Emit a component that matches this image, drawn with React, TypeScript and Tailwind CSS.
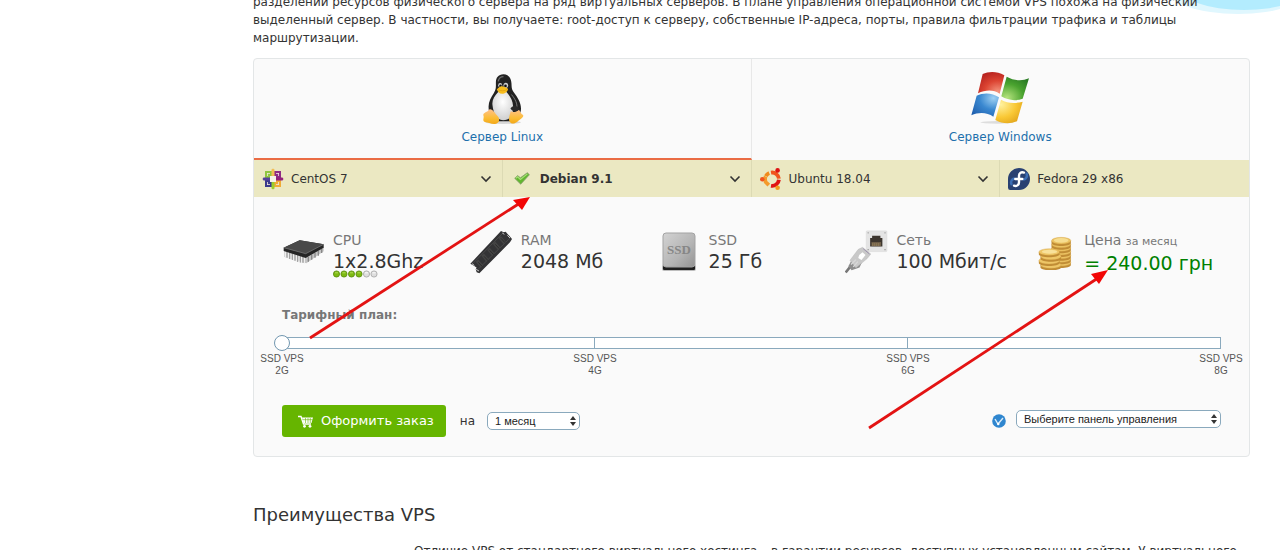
import { useState } from 'react';
import type { ReactNode } from 'react';

const plans = ['2G', '4G', '6G', '8G'];

function TuxLogo() {
  return (
    <svg viewBox="120 35 130 157" className="h-13 w-[43px]" aria-hidden="true">
      <defs>
        <radialGradient id="tuxBelly" cx="50%" cy="35%" r="65%">
          <stop offset="0" stopColor="#ffffff" />
          <stop offset="1" stopColor="#cfcfcf" />
        </radialGradient>
        <linearGradient id="tuxFoot" x1="0" y1="0" x2="0" y2="1">
          <stop offset="0" stopColor="#ffc08a" />
          <stop offset="0.6" stopColor="#fbbd35" />
          <stop offset="1" stopColor="#f3a818" />
        </linearGradient>
      </defs>
      <ellipse cx="187" cy="184" rx="54" ry="5" fill="#d8d8d8" />
      <path d="M188 39c-16 0-23 11-23 25 0 14 1 20-6 31-9 14-17 27-16 44 0 14 6 34 18 42h50c14-5 30-20 30-38 0-20-12-36-22-50-7-10-6-15-7-28-1-14-9-26-24-26z" fill="#222" />
      <path d="M172 60c2-9 8-14 16-14" stroke="#6d6d6d" strokeWidth="4" fill="none" />
      <path d="M172 92c-12 12-20 26-17 42 2 18 10 43 32 44 22 0 32-19 30-43-1-18-10-32-20-43z" fill="url(#tuxBelly)" />
      <path d="M212 100c11 13 19 28 16 42" stroke="#777" strokeWidth="3" fill="none" />
      <ellipse cx="178" cy="72" rx="6" ry="7" fill="#cfcfcf" />
      <ellipse cx="195" cy="72" rx="7" ry="8" fill="#cfcfcf" />
      <circle cx="179" cy="74" r="4" fill="#111" />
      <circle cx="194" cy="74" r="4" fill="#111" />
      <path d="M168 84c5-4 9-9 15-9s15 5 19 8c-2 8-10 15-18 15-8 0-14-7-16-14z" fill="#f8bd1c" />
      <path d="M171 85c9 5 20 5 29-1" stroke="#d99a12" strokeWidth="2" fill="none" />
      <path d="M145 145c10-3 17 12 25 20 10 11 4 23-8 24-11 1-21-5-30-6-10-3-1-12-5-20-1-10 13-9 18-18z" fill="url(#tuxFoot)" />
      <path d="M210 150c5 5 16 4 25-4 4 6 6 12 12 16 4 6-6 10-14 17-8 8-19 12-25 5-7-8-1-22 2-34z" fill="url(#tuxFoot)" />
      <path d="M209 142c8-10 19-9 26-1-3 12-18 14-26 1z" fill="#2a2a2a" />
    </svg>
  );
}

function WindowsLogo() {
  return (
    <svg viewBox="123 27 180 168" className="h-[56px] w-[60px]" aria-hidden="true">
      <defs>
        <radialGradient id="winRed" cx="75%" cy="90%" r="100%">
          <stop offset="0" stopColor="#f3937c" />
          <stop offset="0.5" stopColor="#dc4432" />
          <stop offset="1" stopColor="#b31e1c" />
        </radialGradient>
        <radialGradient id="winGreen" cx="20%" cy="90%" r="100%">
          <stop offset="0" stopColor="#b5e37e" />
          <stop offset="0.6" stopColor="#4aa32f" />
          <stop offset="1" stopColor="#2b7d25" />
        </radialGradient>
        <radialGradient id="winBlue" cx="80%" cy="20%" r="100%">
          <stop offset="0" stopColor="#9ed0f3" />
          <stop offset="0.5" stopColor="#3a88d0" />
          <stop offset="1" stopColor="#1f5fae" />
        </radialGradient>
        <radialGradient id="winYellow" cx="20%" cy="20%" r="110%">
          <stop offset="0" stopColor="#fff2a0" />
          <stop offset="0.5" stopColor="#f9c835" />
          <stop offset="1" stopColor="#d9960f" />
        </radialGradient>
      </defs>
      <ellipse cx="204" cy="187" rx="50" ry="4" fill="#dddddd" />
      <path d="M161 42c18-8 43-9 65 4l-14 55c-18-12-42-12-65-1z" fill="url(#winRed)" />
      <path d="M233 50c22 12 45 14 67 5l-19 61c-22 8-44 5-64-7z" fill="url(#winGreen)" />
      <path d="M143 107c23-10 47-8 67 5l-17 58c-18-13-43-15-66-4z" fill="url(#winBlue)" />
      <path d="M216 119c20 12 43 12 65 6l-17 59c-22 9-44 8-65-4z" fill="url(#winYellow)" />
    </svg>
  );
}

function CentosIcon() {
  return (
    <svg viewBox="0 0 22 22" className="size-[22px]" aria-hidden="true">
      <rect x="3" y="3" width="7" height="7" fill="#8fc640" />
      <rect x="12" y="3" width="7" height="7" fill="#8d2b86" />
      <rect x="3" y="12" width="7" height="7" fill="#3b3a8c" />
      <rect x="12" y="12" width="7" height="7" fill="#f0ab35" />
      <path d="M9.500 3V1.500L11 .5l1.500 1V8h-3z" fill="#f2bd55" />
      <path d="M19 9.500h1.500l1 1.500-1 1.500H14v-3z" fill="#932279" />
      <path d="M9.500 19v1.500l1.500 1 1.500-1V14h-3z" fill="#9ccd2a" />
      <path d="M3 9.500H1.500L.5 11l1 1.500H8v-3z" fill="#55419a" />
      <path d="M8 8h6v6H8z" fill="#f6f3ea" />
      <path d="M5 5.500h3M14 5.500h3M5 16.500h3M14 16.500h3M5.500 5v3M16.500 5v3M5.500 14v3M16.500 14v3" stroke="#efe6dd" strokeWidth="0.800" />
    </svg>
  );
}

function DebianCheck() {
  return (
    <svg viewBox="0 0 16 13" className="h-[13px] w-4" aria-hidden="true">
      <path d="M.7 6.300L3.600 3.600l2.800 2.200L13.300.7l2.100 2L6.700 12.200z" fill="#61b72f" stroke="#8a9a72" strokeWidth="0.800" />
      <path d="M1.800 6.300l1.800-1.400 2.800 2.600 7-5.600" fill="none" stroke="#a7df76" strokeWidth="1.200" />
    </svg>
  );
}

function UbuntuIcon() {
  return (
    <svg viewBox="0 0 22 22" className="size-[22px]" aria-hidden="true">
      <g fill="none" strokeWidth="3.800">
        <path d="M9.200 5A6.800 6.800 0 0 0 5.800 8.200" stroke="#f08a1c" />
        <path d="M5.600 8.400a6.800 6.800 0 0 0 0 5.600l3.200 3.200" stroke="#f49a2a" />
        <path d="M11 4.600a6.800 6.800 0 0 1 7.900 6" stroke="#f0541e" />
        <path d="M18.900 11.800a6.800 6.800 0 0 1-7.900 6" stroke="#e01313" />
      </g>
      <circle cx="2.300" cy="11.200" r="2.300" fill="#f0541e" />
      <circle cx="17.600" cy="2.400" r="2.300" fill="#dd1313" />
      <circle cx="17.600" cy="19.700" r="2.300" fill="#f39a1e" />
    </svg>
  );
}

function FedoraIcon() {
  return (
    <svg viewBox="0 0 22 22" className="size-[22px]" aria-hidden="true">
      <path d="M11 0a11 11 0 0 1 0 22H2.200A2.200 2.200 0 0 1 0 19.800V11A11 11 0 0 1 11 0z" fill="#294172" />
      <path d="M15 11.500a4 4 0 0 0 3-6.500M7 10.500A4 4 0 0 0 4 17" fill="none" stroke="#3c6eb4" strokeWidth="2.500" />
      <path d="M16 4.600C13.300 3.600 11 5 11 7.700v6.500c0 2.900-2.300 4.400-5 3.500M7.300 11h7" fill="none" stroke="#fff" strokeWidth="2.400" strokeLinecap="round" />
    </svg>
  );
}

function ChevronIcon() {
  return (
    <svg viewBox="0 0 12 8" className="h-2 w-3" aria-hidden="true">
      <path d="M1.500 1.500L6 6l4.500-4.500" fill="none" stroke="#333" strokeWidth="1.600" />
    </svg>
  );
}

function CpuIcon() {
  return (
    <svg viewBox="36 62 126 78" className="h-[26px] w-[42px]" aria-hidden="true">
      <path d="M40 95l62 22 56-32v14l-52 36L40 116z" fill="#c4c4c4" />
      <path d="M44 98v20M52 101v20M60 104v20M68 106v21M76 109v21M84 112v20M92 114v20M100 117v18" stroke="#efefef" strokeWidth="4" />
      <path d="M48 100v18M56 102v20M64 105v20M72 108v20M80 110v21M88 113v20M96 116v18" stroke="#999" strokeWidth="3" />
      <path d="M112 116v14M122 110v14M132 104v14M142 98v14M152 92v12" stroke="#888" strokeWidth="4" />
      <path d="M38 88l48-22 72 12v10l-54 31-66-21z" fill="#252525" />
      <path d="M38 88l48-22 72 12-54 28z" fill="#494949" />
      <path d="M38 88l66 18 54-28" fill="none" stroke="#818181" strokeWidth="2" />
    </svg>
  );
}

function RamIcon() {
  return (
    <svg viewBox="604 28 126 130" className="h-11 w-[42px]" aria-hidden="true">
      <path d="M605 128l92-98 8 4 6-2 19 22-6 10-92 93-8-3-3-9 3-5-8-6z" fill="#333335" />
      <path d="M612 128l91-92M625 148l99-97" stroke="#555" strokeWidth="2" />
      <path d="M625 119l15 18M642 101l15 18M659 83l15 18M676 65l15 18M693 48l15 18" stroke="#444" strokeWidth="10" />
      <path d="M629 124l12 13M646 106l12 13M663 88l12 13M680 70l12 13M697 52l12 13" stroke="#2b2b2b" strokeWidth="3" />
      <path d="M701 36l6 4M716 43l8 8M610 128l7 5M622 145l9 5" stroke="#c4c4c4" strokeWidth="3" />
    </svg>
  );
}

function SsdIcon() {
  return (
    <svg viewBox="0 0 34 40" className="h-10 w-[34px]" aria-hidden="true">
      <defs>
        <linearGradient id="ssdBody" x1="0" y1="0" x2="1" y2="1">
          <stop offset="0" stopColor="#d3d3d3" />
          <stop offset="0.6" stopColor="#b4b4b4" />
          <stop offset="1" stopColor="#939393" />
        </linearGradient>
      </defs>
      <rect x="0" y="32" width="34" height="7" rx="2" fill="#bdbdbd" />
      <rect x="1" y="31" width="32" height="7" rx="1" fill="#202020" />
      <rect x="1" y="1" width="32" height="34" rx="3" fill="url(#ssdBody)" stroke="#a3a3a3" />
      <text x="17" y="22" textAnchor="middle" fontFamily="Liberation Serif, serif" fontWeight="bold" fontSize="13" fill="#868686">SSD</text>
    </svg>
  );
}

function NetworkIcon() {
  return (
    <svg viewBox="620 30 130 132" className="h-11 w-[43px]" aria-hidden="true">
      <rect x="684" y="32" width="63" height="63" rx="3" fill="#e4e4e4" stroke="#d5d5d5" />
      <path d="M696 79V54h6v-7h25v7h6v25z" fill="#3c352e" />
      <path d="M700 78V66h29v12z" fill="#71604a" />
      <path d="M704 78v-9M710 78v-9M716 78v-9M722 78v-9" stroke="#a08a60" strokeWidth="2" />
      <g fill="#8b8b8b">
        <circle cx="690" cy="38" r="2" />
        <circle cx="741" cy="38" r="2" />
        <circle cx="690" cy="89" r="2" />
        <circle cx="741" cy="89" r="2" />
      </g>
      <path d="M622 158l16-20" stroke="#777" strokeWidth="8" />
      <path d="M630 139l12-22 18-8 13 14-9 20-24 8z" fill="#8e8e8e" />
      <path d="M635 121l25-33 13-6 25 20-11 14-34 28z" fill="#c9c9c9" stroke="#aaa" />
      <path d="M663 105l10-8 9 8-12 15-10-6z" fill="#fff" />
      <path d="M675 86l19 16" stroke="#9d93ac" strokeWidth="3" />
      <path d="M638 134l15-15M645 141l14-16" stroke="#d9d9d9" strokeWidth="4" />
    </svg>
  );
}

function CoinsIcon() {
  const back = [140, 129, 118, 107, 96, 85, 74];
  const front = [147, 134, 121, 108];
  return (
    <svg viewBox="58 57 104 105" className="h-[35px] w-[35px]" aria-hidden="true">
      {back.map((y) => (
        <g key={y}>
          <path d={`M101 ${y}v7c0 12 58 12 58 0v-7z`} fill="#c08c35" />
          <ellipse cx="130" cy={y} rx="29" ry="10" fill="#ebc262" stroke="#d0a045" />
        </g>
      ))}
      <ellipse cx="130" cy="73" rx="22" ry="7" fill="#f6dd90" />
      {front.map((y, i) => (
        <g key={y}>
          <path d={`M${i % 2 ? 63 : 68} ${y}v7c0 12 62 12 62 0v-7z`} fill="#c08c35" />
          <ellipse cx={i % 2 ? 94 : 99} cy={y} rx="31" ry="10" fill="#eec667" stroke="#d0a045" />
        </g>
      ))}
      <ellipse cx="95" cy="107" rx="23" ry="6" fill="#f8e19a" />
    </svg>
  );
}

function CartIcon() {
  return (
    <svg viewBox="0 0 15 13" className="h-[13px] w-[15px]" aria-hidden="true">
      <path d="M0 1.500h3L5.500 9H13" fill="none" stroke="#fff" strokeWidth="1.400" />
      <path d="M4 2.500h11L13.500 8h-8z" fill="#fff" />
      <path d="M4.500 4.700h10M7.500 3v5M10 3v5M12.300 3v5" stroke="#66b500" strokeWidth="0.600" />
      <circle cx="6.500" cy="11.300" r="1.400" fill="#fff" />
      <circle cx="12" cy="11.300" r="1.400" fill="#fff" />
    </svg>
  );
}

function CpuDots() {
  return (
    <svg viewBox="0 0 45 8" className="-mt-0.5 h-2 w-[45px]" aria-hidden="true">
      {[0, 1, 2, 3, 4, 5].map((i) => (
        <g key={i}>
          <circle cx={3.5 + i * 7.5} cy="4" r="3.1" fill={i < 4 ? '#7dba12' : '#dedede'} stroke={i < 4 ? '#5a8c12' : '#a5a5a5'} strokeWidth="0.8" />
          <path d={`M${2 + i * 7.5} 2.800h3`} stroke={i < 4 ? '#b7e05c' : '#fff'} strokeWidth="0.9" />
        </g>
      ))}
    </svg>
  );
}

function OsButton({ icon, name, active, last }: { icon: ReactNode; name: string; active?: boolean; last?: boolean }) {
  return (
    <button
      type="button"
      className={`flex h-[37px] items-center pr-[10px] pl-2 text-left text-[12px] text-[#333] ${last ? '' : 'border-r border-[#dcdab4]'} ${active ? 'font-bold' : ''}`}
    >
      <span className="flex w-[29px] items-center">
        <span className={active ? 'pl-[3px]' : ''}>{icon}</span>
      </span>
      <span className="grow">{name}</span>
      {!last && <ChevronIcon />}
    </button>
  );
}

function Stat({ icon, label, children }: { icon: ReactNode; label: ReactNode; children: ReactNode }) {
  return (
    <div className="flex">
      <div className="flex h-11 w-[51px] shrink-0 items-center justify-center pr-2">{icon}</div>
      <div className="whitespace-nowrap">
        <div className="text-[14px] leading-5 text-[#777]">{label}</div>
        {children}
      </div>
    </div>
  );
}

function SelectBox({ id, label, options, className }: { id: string; label: string; options: string[]; className: string }) {
  return (
    <div className={`relative ${className}`}>
      <select
        id={id}
        aria-label={label}
        className="block h-[18px] w-full appearance-none rounded-[5px] border border-[#8aa9bd] bg-white pr-4 pl-[7px] font-['Liberation_Sans',sans-serif] text-[11px] leading-4 text-[#222]"
      >
        {options.map((o) => (
          <option key={o}>{o}</option>
        ))}
      </select>
      <svg viewBox="0 0 6 10" className="pointer-events-none absolute top-1 right-1 h-[10px] w-[6px]" aria-hidden="true">
        <path d="M3 0l3 4H0zM3 10L0 6h6z" fill="#333" />
      </svg>
    </div>
  );
}

export default function App() {
  const [plan, setPlan] = useState(0);

  return (
    <div className="relative h-screen overflow-hidden bg-white font-['DejaVu_Sans',sans-serif] text-[12px] leading-[18px] text-[#333]">
      <svg viewBox="0 0 110 15" className="absolute top-0 right-0 h-[15px] w-[110px]" aria-hidden="true">
        <ellipse cx="68" cy="-12" rx="72" ry="26" fill="#e0f7fe" />
        <ellipse cx="74" cy="-14" rx="66" ry="24" fill="#b3ecfe" />
      </svg>

      <main className="relative pr-[30px] pl-[253px]">
        <p className="-mt-[7px] whitespace-nowrap">
          разделении ресурсов физического сервера на ряд виртуальных серверов. В плане управления операционной системой VPS похожа на физический
          <br />
          выделенный сервер. В частности, вы получаете: root-доступ к серверу, собственные IP-адреса, порты, правила фильтрации трафика и таблицы
          <br />
          маршрутизации.
        </p>

        <section className="mt-[11px] rounded-[4px] border border-[#e3e6e7] bg-[#fafafa]">
          {/* Platform */}
          <nav className="grid grid-cols-2 text-[#1d70ac]">
            <a href="#linux" className="flex h-[101px] flex-col items-center border-r border-b-2 border-r-[#e8e8e8] border-b-[#ea6c44] pt-[14px]">
              <TuxLogo />
              <span className="mt-[3px]">Сервер Linux</span>
            </a>
            <a href="#windows" className="flex h-[101px] flex-col items-center pt-[10px]">
              <WindowsLogo />
              <span className="mt-[3px]">Сервер Windows</span>
            </a>
          </nav>

          {/* Distribution */}
          <div className="grid grid-cols-4 bg-[#ebe8c2]">
            <OsButton icon={<CentosIcon />} name="CentOS 7" />
            <OsButton icon={<DebianCheck />} name="Debian 9.1" active />
            <OsButton icon={<UbuntuIcon />} name="Ubuntu 18.04" />
            <OsButton icon={<FedoraIcon />} name="Fedora 29 x86" last />
          </div>

          <form className="px-7 pb-[19px]" onSubmit={(e) => e.preventDefault()}>
            <div className="grid grid-cols-5 pt-[33px]">
              <Stat icon={<CpuIcon />} label="CPU">
                <div className="text-[19px] leading-[22px]">1x2.8Ghz</div>
                <CpuDots />
              </Stat>
              <Stat icon={<RamIcon />} label="RAM">
                <div className="text-[19px] leading-[22px]">2048 Мб</div>
              </Stat>
              <Stat icon={<SsdIcon />} label="SSD">
                <div className="text-[19px] leading-[22px]">25 Гб</div>
              </Stat>
              <Stat icon={<NetworkIcon />} label="Сеть">
                <div className="text-[19px] leading-[22px]">100 Мбит/с</div>
              </Stat>
              <Stat
                icon={<CoinsIcon />}
                label={
                  <>
                    Цена <span className="text-[11px]">за месяц</span>
                  </>
                }
              >
                <div className="text-[19px] leading-[22px] text-[#008000]">= 240.00 грн</div>
              </Stat>
            </div>

            {/* Plan slider */}
            <label htmlFor="plan" className="mt-7 block font-bold text-[#777]">
              Тарифный план:
            </label>
            <div className="mt-[11px] grid items-center">
              <div className="col-start-1 row-start-1 grid h-3 grid-cols-3 divide-x divide-[#8aa9bd] border border-[#8aa9bd] bg-white">
                <span />
                <span />
                <span />
              </div>
              <input
                id="plan"
                type="range"
                min={0}
                max={3}
                value={plan}
                onChange={(e) => setPlan(Number(e.target.value))}
                className="relative col-start-1 row-start-1 -mx-2 h-4 appearance-none bg-transparent [&::-webkit-slider-thumb]:size-4 [&::-webkit-slider-thumb]:appearance-none [&::-webkit-slider-thumb]:rounded-full [&::-webkit-slider-thumb]:border [&::-webkit-slider-thumb]:border-[#7297b0] [&::-webkit-slider-thumb]:bg-white"
              />
            </div>
            <div className="-mx-7 mt-0.5 flex justify-between text-center font-['Liberation_Sans',sans-serif] text-[10px] leading-3 text-[#555]">
              {plans.map((p) => (
                <span key={p} className="w-14">
                  SSD VPS
                  <br />
                  {p}
                </span>
              ))}
            </div>

            {/* Order */}
            <div className="mt-7 flex items-center">
              <button type="submit" className="flex h-8 items-center gap-2 rounded-[3px] bg-[#66b500] pr-3 pl-4 text-[13px] text-white">
                <CartIcon />
                Оформить заказ
              </button>
              <label htmlFor="period" className="mr-3 ml-[14px]">
                на
              </label>
              <SelectBox id="period" label="Период" options={['1 месяц', '3 месяца', '12 месяцев']} className="w-[93px]" />
              <div className="ml-auto flex items-center gap-[10px]">
                <svg viewBox="0 0 14 14" className="size-[14px]" aria-hidden="true">
                  <circle cx="7" cy="7" r="6.800" fill="#2f86cf" />
                  <path d="M3 5l3 5 5-6" fill="none" stroke="#d9ecfa" strokeWidth="1.400" />
                  <circle cx="6.300" cy="10" r="1.200" fill="#fff" />
                </svg>
                <SelectBox id="panel" label="Панель управления" options={['Выберите панель управления', 'ISPmanager', 'cPanel']} className="mb-1 w-[205px]" />
              </div>
            </div>
          </form>
        </section>

        <h2 className="mt-[46px] text-[18px] leading-6">Преимущества VPS</h2>
        <p className="mt-[15px] pl-[161px] whitespace-nowrap">
          Отличие VPS от стандартного виртуального хостинга – в гарантии ресурсов, доступных установленным сайтам. У виртуального
        </p>
      </main>

      {/* Pointer arrows */}
      <svg viewBox="0 0 1280 550" className="pointer-events-none absolute top-0 left-0 h-[550px] w-[1280px]" aria-hidden="true">
        <g stroke="#e31313" strokeWidth="2.800">
          <path d="M310 338L520 203" />
          <path d="M869 428L1098 278" />
        </g>
        <g fill="#f20505">
          <path d="M530 197l-17 3 9 10z" />
          <path d="M1108 270l-17 4 8 10z" />
        </g>
      </svg>
    </div>
  );
}
